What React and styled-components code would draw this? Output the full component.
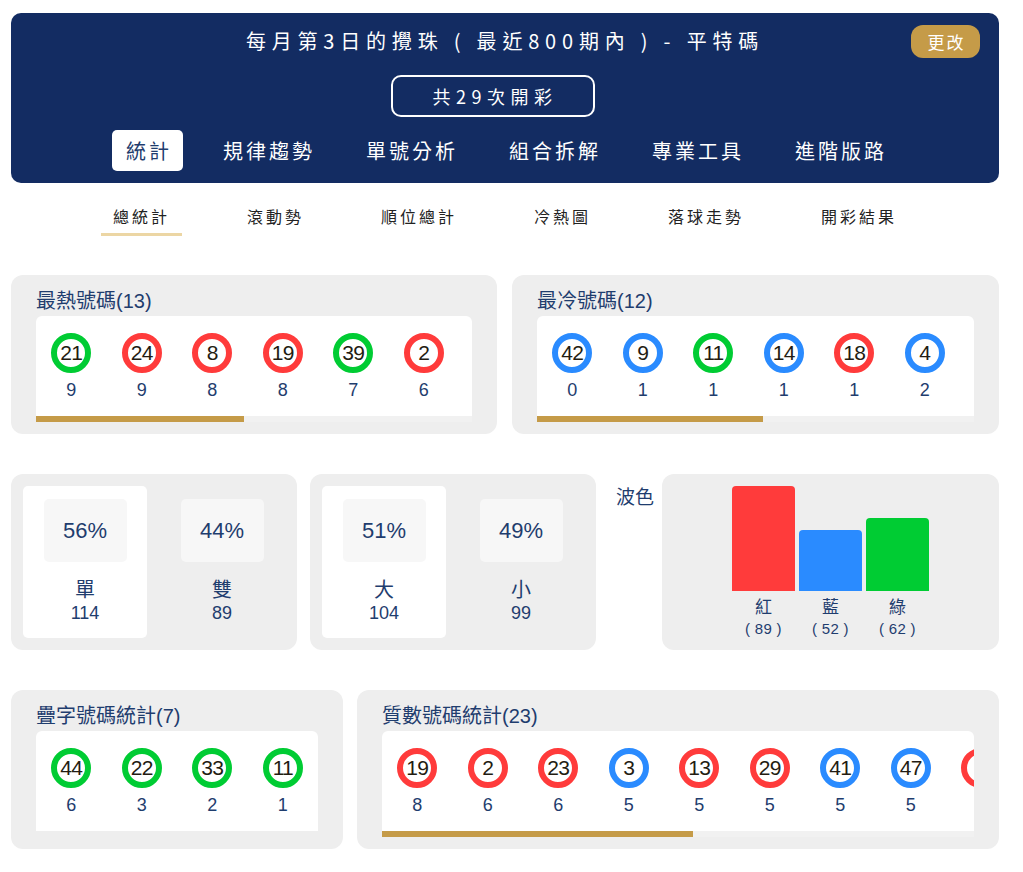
import styled, { createGlobalStyle } from 'styled-components';

const GlobalStyle = createGlobalStyle`
  body {
    margin: 0;
    background: #ffffff;
    font-family: "Liberation Sans", "Noto Sans CJK TC", sans-serif;
  }
`;

const NAVY = '#132c62';
const INK = '#1f3d6e';
const GOLD = '#c59b48';

const BALL_COLORS = {
  red: '#ff3b3b',
  green: '#00cc33',
  blue: '#2a8bff',
};

const Page = styled.div`
  width: 988px;
  margin: 0 0 0 11px;
  padding: 13px 0 23px;
`;

const Header = styled.div`
  background: ${NAVY};
  border-radius: 10px;
  padding: 12px 0 12px;
  display: flex;
  flex-direction: column;
  align-items: center;
  color: #fff;
  font-family: "Noto Sans CJK TC", sans-serif;
`;

const TitleRow = styled.div`
  width: 100%;
  display: grid;
  grid-template-columns: 1fr auto 1fr;
  align-items: center;
`;

const Title = styled.div`
  grid-column: 2;
  font-size: 20px;
  line-height: 31px;
  letter-spacing: 5.8px;
  white-space: pre;
  padding-bottom: 2px;
`;

const EditButton = styled.button`
  justify-self: end;
  margin-right: 19px;
  width: 69px;
  height: 33px;
  border: none;
  border-radius: 12px;
  background: ${GOLD};
  color: #fff;
  font-family: "Noto Sans CJK TC", sans-serif;
  font-size: 17px;
  letter-spacing: 2px;
  padding: 0 0 0 2px;
`;

const CountBox = styled.div`
  margin: 17px 25px 0 0;
  width: 204px;
  height: 42px;
  box-sizing: border-box;
  border: 2px solid #fff;
  border-radius: 10px;
  display: flex;
  align-items: center;
  justify-content: center;
  font-size: 18px;
  letter-spacing: 5.5px;
  padding-left: 5px;
`;

const Tabs = styled.div`
  margin-top: 13px;
  display: flex;
  gap: 26px;
`;

const Tab = styled.div`
  height: 41px;
  padding: 0 11px 0 14px;
  border-radius: 5px;
  display: flex;
  align-items: center;
  font-size: 20px;
  letter-spacing: 3px;
  background: ${(p) => (p.$active ? '#fff' : 'transparent')};
  color: ${(p) => (p.$active ? INK : '#fff')};
`;

const SubTabs = styled.div`
  display: flex;
  justify-content: center;
  gap: 53px;
  padding-top: 21px;
  font-family: "Noto Sans CJK TC", sans-serif;
`;

const SubTab = styled.div`
  padding: 0 12px 5px 12px;
  font-size: 16px;
  line-height: 24px;
  letter-spacing: 3px;
  color: #222;
  border-bottom: 3px solid ${(p) => (p.$active ? '#ecd6a4' : 'transparent')};
`;

const Row = styled.div`
  display: flex;
  gap: ${(p) => p.$gap}px;
  margin-top: ${(p) => p.$top}px;
  align-items: stretch;
`;

const Panel = styled.div`
  width: ${(p) => p.$w}px;
  flex-shrink: 0;
  box-sizing: border-box;
  background: #eeeeee;
  border-radius: 12px;
  padding: 14px 25px 12px;
`;

const PanelTitle = styled.div`
  font-size: 20px;
  line-height: 24px;
  color: ${INK};
  margin-bottom: 3px;
`;

const BallBox = styled.div`
  background: #fff;
  border-radius: 6px 6px 0 0;
  overflow: hidden;
`;

const BallRow = styled.div`
  display: flex;
  padding: 17px 0 15px;
`;

const BallCell = styled.div`
  width: 70.5px;
  flex-shrink: 0;
  display: flex;
  flex-direction: column;
  align-items: center;
  gap: 6px;
`;

const Ball = styled.div`
  width: 40px;
  height: 40px;
  box-sizing: border-box;
  border-radius: 50%;
  border: 6px solid ${(p) => BALL_COLORS[p.$color]};
  display: flex;
  align-items: center;
  justify-content: center;
  font-size: 21px;
  letter-spacing: -0.8px;
  color: #231c12;
`;

const BallCount = styled.div`
  font-size: 18px;
  line-height: 22px;
  color: ${INK};
`;

const Track = styled.div`
  height: 6px;
  background: #f1f1f1;
`;

const Fill = styled.div`
  height: 100%;
  background: ${GOLD};
`;

const StatPanel = styled.div`
  width: 286px;
  flex-shrink: 0;
  box-sizing: border-box;
  background: #eeeeee;
  border-radius: 12px;
  padding: 12px;
  display: flex;
  gap: 13px;
`;

const StatCol = styled.div`
  width: 124px;
  box-sizing: border-box;
  padding: 13px 21px 12px;
  border-radius: 5px;
  background: ${(p) => (p.$white ? '#fff' : 'transparent')};
  display: flex;
  flex-direction: column;
  align-items: center;
  color: ${INK};
`;

const Percent = styled.div`
  width: 83px;
  height: 63px;
  border-radius: 5px;
  background: #f7f7f7;
  display: flex;
  align-items: center;
  justify-content: center;
  font-size: 22px;
`;

const StatLabel = styled.div`
  margin-top: 16px;
  font-size: 20px;
  line-height: 24px;
`;

const StatNum = styled.div`
  font-size: 18px;
  line-height: 22px;
`;

const WaveGroup = styled.div`
  display: flex;
  margin-left: 7px;
`;

const WaveLabel = styled.div`
  width: 38px;
  margin: 12px 8px 0 0;
  font-size: 19px;
  line-height: 24px;
  color: ${INK};
  flex-shrink: 0;
`;

const WavePanel = styled.div`
  width: 337px;
  flex-shrink: 0;
  box-sizing: border-box;
  background: #eeeeee;
  border-radius: 12px;
  padding: 12px 0 11px;
  display: flex;
  justify-content: center;
  gap: 4px;
`;

const BarCol = styled.div`
  width: 63px;
  display: flex;
  flex-direction: column;
  align-items: center;
  color: ${INK};
`;

const BarArea = styled.div`
  height: 105px;
  width: 100%;
  display: flex;
  align-items: flex-end;
`;

const Bar = styled.div`
  width: 100%;
  background: ${(p) => BALL_COLORS[p.$color]};
  border-radius: 4px 4px 0 0;
`;

const BarName = styled.div`
  margin-top: 6px;
  font-size: 17px;
  line-height: 22px;
`;

const BarValue = styled.div`
  font-size: 15px;
  line-height: 20px;
  letter-spacing: 0.3px;
  white-space: pre;
`;

const hot = [
  [21, 'green', 9], [24, 'red', 9], [8, 'red', 8],
  [19, 'red', 8], [39, 'green', 7], [2, 'red', 6],
];
const cold = [
  [42, 'blue', 0], [9, 'blue', 1], [11, 'green', 1],
  [14, 'blue', 1], [18, 'red', 1], [4, 'blue', 2],
];
const twins = [
  [44, 'green', 6], [22, 'green', 3], [33, 'green', 2], [11, 'green', 1],
];
const primes = [
  [19, 'red', 8], [2, 'red', 6], [23, 'red', 6], [3, 'blue', 5],
  [13, 'red', 5], [29, 'red', 5], [41, 'blue', 5], [47, 'blue', 5],
  [7, 'red', ''],
];

function BallPanel({ title, balls, width, fill }) {
  return (
    <Panel $w={width}>
      <PanelTitle>{title}</PanelTitle>
      <BallBox>
        <BallRow>
          {balls.map(([n, c, cnt], i) => (
            <BallCell key={i}>
              <Ball $color={c}>{n}</Ball>
              <BallCount>{cnt === '' ? '\u00a0' : cnt}</BallCount>
            </BallCell>
          ))}
        </BallRow>
        {fill != null && (
          <Track>
            <Fill style={{ width: fill + '%' }} />
          </Track>
        )}
      </BallBox>
    </Panel>
  );
}

function StatPair({ items }) {
  return (
    <StatPanel>
      {items.map((it, i) => (
        <StatCol key={i} $white={i === 0}>
          <Percent>{it.pct}</Percent>
          <StatLabel>{it.label}</StatLabel>
          <StatNum>{it.num}</StatNum>
        </StatCol>
      ))}
    </StatPanel>
  );
}

const waves = [
  { name: '紅', value: 89, color: 'red' },
  { name: '藍', value: 52, color: 'blue' },
  { name: '綠', value: 62, color: 'green' },
];

export default function App() {
  const tabs = ['統計', '規律趨勢', '單號分析', '組合拆解', '專業工具', '進階版路'];
  const subTabs = ['總統計', '滾動勢', '順位總計', '冷熱圖', '落球走勢', '開彩結果'];

  return (
    <Page>
      <GlobalStyle />
      <Header>
        <TitleRow>
          <Title>每月第3日的攪珠 ( 最近800期內 ) - 平特碼</Title>
          <EditButton>更改</EditButton>
        </TitleRow>
        <CountBox>共29次開彩</CountBox>
        <Tabs>
          {tabs.map((t, i) => (
            <Tab key={t} $active={i === 0}>{t}</Tab>
          ))}
        </Tabs>
      </Header>

      <SubTabs>
        {subTabs.map((t, i) => (
          <SubTab key={t} $active={i === 0}>{t}</SubTab>
        ))}
      </SubTabs>

      <Row $top={39} $gap={15}>
        <BallPanel title="最熱號碼(13)" balls={hot} width={486} fill={47.6} />
        <BallPanel title="最冷號碼(12)" balls={cold} width={487} fill={51.7} />
      </Row>

      <Row $top={40} $gap={13}>
        <StatPair
          items={[
            { pct: '56%', label: '單', num: 114 },
            { pct: '44%', label: '雙', num: 89 },
          ]}
        />
        <StatPair
          items={[
            { pct: '51%', label: '大', num: 104 },
            { pct: '49%', label: '小', num: 99 },
          ]}
        />
        <WaveGroup>
          <WaveLabel>波色</WaveLabel>
          <WavePanel>
            {waves.map((w) => (
              <BarCol key={w.name}>
                <BarArea>
                  <Bar $color={w.color} style={{ height: Math.round(w.value * 1.18) + 'px' }} />
                </BarArea>
                <BarName>{w.name}</BarName>
                <BarValue>{`( ${w.value} )`}</BarValue>
              </BarCol>
            ))}
          </WavePanel>
        </WaveGroup>
      </Row>

      <Row $top={40} $gap={14}>
        <BallPanel title="疊字號碼統計(7)" balls={twins} width={332} />
        <BallPanel title="質數號碼統計(23)" balls={primes} width={642} fill={52.5} />
      </Row>
    </Page>
  );
}
